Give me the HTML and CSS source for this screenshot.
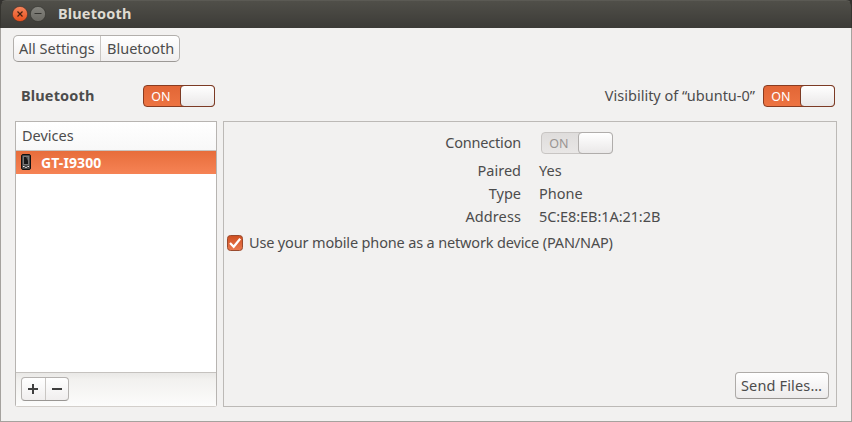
FILE: index.html
```html
<!DOCTYPE html>
<html lang="en">
<head>
<meta charset="utf-8">
<title>Bluetooth</title>
<link rel="stylesheet" href="styles.css">
</head>
<body>
<div class="window">
  <header class="titlebar">
    <svg class="win-btn" width="16" height="16" viewBox="0 0 16 16">
      <defs><linearGradient id="close" x1="0" y1="0" x2="0" y2="1"><stop offset="0" stop-color="#f5855c"/><stop offset="1" stop-color="#e9501c"/></linearGradient></defs>
      <circle cx="8" cy="8" r="7.6" fill="url(#close)" stroke="#4a3129" stroke-width=".6"/>
      <path d="M5.500 5.500l5 5M10.500 5.500l-5 5" stroke="#43200f" stroke-width="1.200"/>
    </svg>
    <svg class="win-btn" width="16" height="16" viewBox="0 0 16 16">
      <defs><linearGradient id="min" x1="0" y1="0" x2="0" y2="1"><stop offset="0" stop-color="#85847e"/><stop offset="1" stop-color="#6a6963"/></linearGradient></defs>
      <circle cx="8" cy="8" r="7.600" fill="url(#min)" stroke="#33322e" stroke-width=".6"/>
      <path d="M4.500 7.500h7" stroke="#353430" stroke-width="1"/>
    </svg>
    <h1 class="title">Bluetooth</h1>
  </header>
  <div class="content">
    <nav class="crumbs">
      <button class="crumb crumb-all"><span>All Settings</span></button>
      <button class="crumb crumb-here"><span>Bluetooth</span></button>
    </nav>
    <div class="power">
      <span class="power-label">Bluetooth</span>
      <span class="switch"><span class="switch-text">ON</span><span class="knob"></span></span>
      <span class="vis-label">Visibility of “ubuntu-0”</span>
      <span class="switch"><span class="switch-text">ON</span><span class="knob"></span></span>
    </div>
    <main class="panes">
      <section class="devices">
        <div class="list-head"><span>Devices</span></div>
        <div class="device">
          <svg width="11" height="17" viewBox="0 0 11 17">
            <rect x=".5" y=".5" width="9" height="15" rx="1.5" fill="#4a4a4a" stroke="#111"/>
            <rect x="2.5" y="2.5" width="5" height="8" fill="#171717" stroke="#777"/>
            <path d="M5 3h2v4z" fill="#555"/>
            <path d="M2 12.500h1.500M6.500 12.500h1.500" stroke="#eee" stroke-width="1.200"/>
            <path d="M4 13.500h2" stroke="#bbb"/>
          </svg>
          <span>GT-I9300</span>
        </div>
        <div class="list-body"></div>
        <div class="list-tools">
          <div class="pair">
            <button><svg width="12" height="12" viewBox="0 0 12 12"><path d="M1 6h10M6 1v10" stroke="#3f3f3f" stroke-width="2"/></svg></button>
            <button><svg width="12" height="12" viewBox="0 0 12 12"><path d="M1 6h10" stroke="#3f3f3f" stroke-width="2"/></svg></button>
          </div>
        </div>
      </section>
      <section class="details">
        <div class="props">
          <span class="key k-connection">Connection</span>
          <span class="switch disabled"><span class="switch-text">ON</span><span class="knob"></span></span>
          <span class="key">Paired</span><span class="value">Yes</span>
          <span class="key">Type</span><span class="value">Phone</span>
          <span class="key k-address">Address</span><span class="value v-address">5C:E8:EB:1A:21:2B</span>
        </div>
        <div class="check-row">
          <svg width="16" height="16" viewBox="0 0 16 16">
            <defs><linearGradient id="chk" x1="0" y1="0" x2="0" y2="1"><stop offset="0" stop-color="#cf4f20"/><stop offset="1" stop-color="#ea7a50"/></linearGradient></defs>
            <rect x=".5" y=".5" width="15" height="15" rx="3" fill="url(#chk)" stroke="#9a4a2e"/>
            <path d="M3 8l3.700 3.800 6.500-8" fill="none" stroke="#fff" stroke-width="2.200"/>
          </svg>
          <span class="check-label">Use your mobile phone as a network device (PAN/NAP)</span>
        </div>
        <button class="send"><span>Send Files…</span></button>
      </section>
    </main>
  </div>
</div>
</body>
</html>
```
FILE: styles.css
```css
* { box-sizing: border-box; }
body { margin: 0; background: #33322f; font: 14.5px/20px "Noto Sans", sans-serif; color: #4c4c4c; }
button { font: inherit; color: inherit; padding: 0; margin: 0; }
span { white-space: nowrap; }
.window { width: 852px; height: 422px; display: flex; flex-direction: column; }
.titlebar { height: 28px; flex: none; display: flex; align-items: center; padding-left: 11px; padding-bottom: 1px; border: 1px solid #35342f; border-top-color: #5b5a54; border-bottom: 0; border-radius: 6px 6px 0 0; background: linear-gradient(#504f49, #3c3b37); }
.win-btn { margin-right: 2px; }
.title { margin: 0 0 0 10px; padding-bottom: 2px; font-size: 14.5px; line-height: 20px; font-weight: 700; color: #dfdbd2; letter-spacing: .15px; }
.content { flex: 1; min-height: 0; background: #f2f1f0; border: 1px solid #a5a29e; border-top: 0; padding: 7px 14px 14px; display: flex; flex-direction: column; }
.crumbs { display: flex; width: 167px; height: 27px; margin-left: -2px; border: 1px solid #b2afac; border-bottom-color: #9c9996; border-radius: 5px; background: linear-gradient(#fff, #f0eeee); }
.crumb { border: 0; background: none; text-align: left; padding: 0 0 2px 5px; }
.crumb-all { width: 87px; border-right: 1px solid #c9c6c3; }
.crumb-here { width: 78px; padding-left: 6px; }
.power { display: flex; align-items: center; height: 22px; margin-top: 23px; padding-left: 6px; padding-right: 2px; }
.power-label { font-weight: 700; width: 122px; padding-bottom: 2px; letter-spacing: .15px; }
.vis-label { margin-left: auto; margin-right: 8px; padding-bottom: 2px; }
.switch { display: flex; width: 72px; height: 22px; border: 1px solid #893c21; border-radius: 4px; background: linear-gradient(#e26636, #ed7442); color: #fff; flex: none; }
.switch-text { width: 36px; flex: none; padding-right: 2px; text-align: center; font-size: 12.5px; line-height: 21px; }
.knob { width: 35px; flex: none; height: 22px; margin: -1px -1px 0 0; border: 1px solid #7c3b25; border-radius: 4px; background: linear-gradient(#fff, #eae8e8); }
.disabled { border-color: #c8c5c3; background: linear-gradient(#dfdddc, #e9e7e6); color: #999593; }
.disabled .knob { border-color: #b0adab; }
.panes { display: flex; gap: 6px; margin-top: 14px; height: 286px; }
.devices { width: 202px; border: 1px solid #b7b4b1; border-bottom-color: #d3cfcb; border-radius: 0 0 3px 3px; display: flex; flex-direction: column; }
.list-head { height: 29px; padding: 3px 6px; background: linear-gradient(#fff, #f8f8f8); border-bottom: 1px solid #c9c4c0; }
.device { height: 23px; display: flex; align-items: center; padding-left: 5px; background: linear-gradient(#e76d3b, #f68355); color: #fff; font-weight: 700; font-size: 14px; }
.device span { margin-left: 9px; letter-spacing: .1px; }
.list-body { flex: 1; background: #fff; }
.list-tools { height: 34px; border-top: 1px solid #c5c2bf; background: linear-gradient(#e9e8e6, #f2f1ef 20%, #fcfcfb); padding: 4px 5px; }
.pair { width: 48px; height: 24px; display: flex; border: 1px solid #b5b2b0; border-bottom-color: #999693; border-radius: 4px; background: linear-gradient(#fff, #f0eeee); }
.pair button { flex: 1; border: 0; background: none; display: flex; align-items: center; justify-content: center; }
.pair button + button { border-left: 1px solid #c9c6c3; }
.details { width: 614px; border: 1px solid #bcb9b6; display: flex; flex-direction: column; padding: 10px 7px 7px 3px; }
.props { display: grid; grid-template-columns: 294px 130px; column-gap: 18px; grid-template-rows: 27px 23px 23px 23px; align-items: center; }
.props > span:nth-child(-n+2) { align-self: start; }
.props .switch { margin-left: 2px; }
.key { text-align: right; }
.key, .value { padding-bottom: 2px; }
.k-connection { letter-spacing: -.2px; padding-bottom: 0; }
.k-address { letter-spacing: .1px; }
.v-address { letter-spacing: -.08px; }
.check-row { display: flex; align-items: center; height: 20px; margin-top: 5px; }
.check-label { margin-left: 6px; padding-bottom: 2px; letter-spacing: -.155px; }
.send { width: 94px; height: 27px; margin: auto 0 0 auto; border: 1px solid #aeaba8; border-bottom-color: #989592; border-radius: 4px; background: linear-gradient(#fff, #edebeb); text-align: left; padding: 0 0 2px 5px; letter-spacing: .15px; }
```
